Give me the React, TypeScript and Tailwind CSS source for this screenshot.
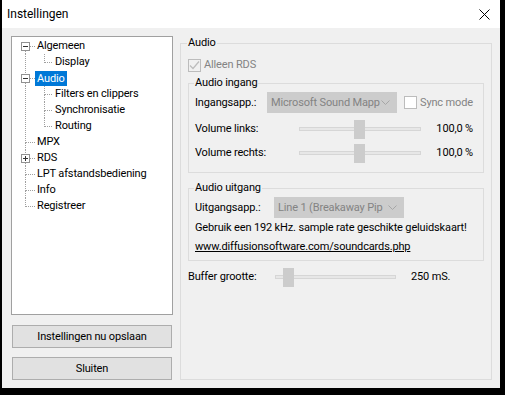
import React from "react";

type Row = {
  label: string;
  level: 0 | 1;
  box?: "minus" | "plus";
  rootTop: boolean;
  rootBottom: boolean;
  childBottom?: boolean;
  selected?: boolean;
};

const rows: Row[] = [
  { label: "Algemeen", level: 0, box: "minus", rootTop: false, rootBottom: true },
  { label: "Display", level: 1, rootTop: true, rootBottom: true, childBottom: false },
  { label: "Audio", level: 0, box: "minus", rootTop: true, rootBottom: true, selected: true },
  { label: "Filters en clippers", level: 1, rootTop: true, rootBottom: true, childBottom: true },
  { label: "Synchronisatie", level: 1, rootTop: true, rootBottom: true, childBottom: true },
  { label: "Routing", level: 1, rootTop: true, rootBottom: true, childBottom: false },
  { label: "MPX", level: 0, rootTop: true, rootBottom: true },
  { label: "RDS", level: 0, box: "plus", rootTop: true, rootBottom: true },
  { label: "LPT afstandsbediening", level: 0, rootTop: true, rootBottom: true },
  { label: "Info", level: 0, rootTop: true, rootBottom: true },
  { label: "Registreer", level: 0, rootTop: true, rootBottom: false },
];

const DOT = "#a0a0a0";

function TreeGlyph({ r }: { r: Row }) {
  const w = r.level === 0 ? 23 : 41;
  const segs: React.ReactElement[] = [];
  if (r.level === 0) {
    if (r.box) {
      if (r.rootTop) segs.push(<line key="rt" x1={13.5} y1={0} x2={13.5} y2={4} />);
      if (r.rootBottom) segs.push(<line key="rb" x1={13.5} y1={13} x2={13.5} y2={16} />);
      segs.push(<line key="h" x1={18} y1={8.5} x2={23} y2={8.5} />);
    } else {
      if (r.rootTop) segs.push(<line key="rt" x1={13.5} y1={0} x2={13.5} y2={9} />);
      if (r.rootBottom) segs.push(<line key="rb" x1={13.5} y1={9} x2={13.5} y2={16} />);
      segs.push(<line key="h" x1={14} y1={8.5} x2={23} y2={8.5} />);
    }
  } else {
    segs.push(<line key="r" x1={13.5} y1={0} x2={13.5} y2={16} />);
    segs.push(<line key="ct" x1={32.5} y1={0} x2={32.5} y2={9} />);
    if (r.childBottom) segs.push(<line key="cb" x1={32.5} y1={9} x2={32.5} y2={16} />);
    segs.push(<line key="h" x1={33} y1={8.5} x2={41} y2={8.5} />);
  }
  return (
    <svg width={w} height={16} className="shrink-0" viewBox={`0 0 ${w} 16`}>
      <g stroke={DOT} strokeWidth={1} strokeDasharray="1 1">
        {segs}
      </g>
      {r.box && (
        <g>
          <rect x={9.5} y={4.5} width={8} height={8} fill="#ffffff" stroke="#919191" />
          <line x1={11} y1={8.5} x2={16} y2={8.5} stroke="#333" />
          {r.box === "plus" && <line x1={13.5} y1={6} x2={13.5} y2={11} stroke="#333" />}
        </g>
      )}
    </svg>
  );
}

function Checkbox({ checked }: { checked?: boolean }) {
  return (
    <div className="w-[13px] h-[13px] border border-[#bcbcbc] bg-[#f0f0f0] shrink-0 flex items-center justify-center">
      {checked && (
        <svg width="11" height="11" viewBox="0 0 11 11">
          <path d="M1 5.5 L4 8.5 L10 1.5" fill="none" stroke="#bcbcbc" strokeWidth="1.2" />
        </svg>
      )}
    </div>
  );
}

function Combo({ text, width }: { text: string; width: string }) {
  return (
    <div className={`${width} h-[21px] bg-[#cccccc] border border-[#cccccc] flex items-center pl-[3px] pr-[6px] shrink-0`}>
      <span className="flex-1 text-[#838383] whitespace-nowrap overflow-hidden">{text}</span>
      <svg width="9" height="6" viewBox="0 0 9 6" className="shrink-0">
        <path d="M0.5 0.5 L4.5 4.5 L8.5 0.5" fill="none" stroke="#a6a6a6" />
      </svg>
    </div>
  );
}

function Slider({ trackW, thumbLeft }: { trackW: string; thumbLeft: string }) {
  return (
    <div className={`${trackW} h-[20px] flex items-center shrink-0`}>
      <div className="w-full h-[4px] bg-[#e7e7e7] border border-[#d6d6d6] flex items-center">
        <div className={`${thumbLeft} w-[11px] h-[19px] bg-[#cccccc] shrink-0`} />
      </div>
    </div>
  );
}

export default function App() {
  return (
    <div className="w-[505px] h-[395px] bg-black pl-[2px] font-['Roboto',sans-serif] text-[11px] tracking-[-0.15px] leading-[16px] text-black">
      <div className="w-[498px] h-[388px] flex flex-col">
        <div className="h-[28px] bg-white flex items-center justify-between pl-[5px] pr-[10px] shrink-0">
          <span className="text-[12px] tracking-normal">Instellingen</span>
          <svg width="11" height="11" viewBox="0 0 11 11" className="mt-[1px]">
            <path d="M0.5 0.5 L10.5 10.5 M10.5 0.5 L0.5 10.5" stroke="#000" strokeWidth="1" />
          </svg>
        </div>
        <div className="flex-1 bg-[#f0f0f0] flex">
          {/* left column */}
          <div className="ml-[9px] mt-[8px] flex flex-col w-[162px]">
            <div className="h-[279px] bg-white border border-[#a0a0a0] pt-[1px]">
              {rows.map((r) => (
                <div key={r.label} className="h-[16px] flex items-start">
                  <TreeGlyph r={r} />
                  <span
                    className={
                      r.selected
                        ? "px-[2px] bg-[#0078d7] text-white whitespace-nowrap h-[15px] leading-[15px] mt-[1px]"
                        : "px-[2px] whitespace-nowrap"
                    }
                  >
                    {r.label}
                  </span>
                </div>
              ))}
            </div>
            <div className="ml-[1px] mt-[10px] w-[160px] h-[23px] bg-[#e1e1e1] border border-[#adadad] flex items-center justify-center">
              Instellingen nu opslaan
            </div>
            <div className="ml-[1px] mt-[9px] w-[160px] h-[23px] bg-[#e1e1e1] border border-[#adadad] flex items-center justify-center">
              Sluiten
            </div>
          </div>

          {/* right column */}
          <div className="ml-[7px] mt-[15px] w-[312px] h-[337px] border border-[#dcdcdc] px-[7px] flex flex-col">
            <div className="-mt-[9px] -ml-[1px] px-[1px] w-fit bg-[#f0f0f0]">Audio</div>

            <div className="mt-[6px] h-[16px] flex items-center">
              <Checkbox checked />
              <span className="ml-[3px] text-[#838383]">Alleen RDS</span>
            </div>

            {/* Audio ingang */}
            <div className="mt-[10px] border border-[#dcdcdc] px-[6px] pb-[9px] flex flex-col">
              <div className="-mt-[9px] -ml-[1px] px-[1px] w-fit bg-[#f0f0f0]">Audio ingang</div>
              <div className="mt-[1px] flex items-center">
                <span className="w-[72px] shrink-0 whitespace-nowrap">Ingangsapp.:</span>
                <Combo text="Microsoft Sound Mapp" width="w-[130px]" />
                <div className="ml-[7px] flex items-center">
                  <div className="w-[13px] h-[13px] border border-[#bcbcbc] bg-white" />
                  <span className="ml-[3px] text-[#838383] whitespace-nowrap">Sync mode</span>
                </div>
              </div>
              <div className="mt-[6px] h-[20px] flex items-center">
                <span className="w-[104px] shrink-0">Volume links:</span>
                <Slider trackW="w-[122px]" thumbLeft="ml-[54px]" />
                <span className="w-[52px] text-right whitespace-nowrap">100,0 %</span>
              </div>
              <div className="mt-[4px] h-[20px] flex items-center">
                <span className="w-[104px] shrink-0">Volume rechts:</span>
                <Slider trackW="w-[122px]" thumbLeft="ml-[54px]" />
                <span className="w-[52px] text-right whitespace-nowrap">100,0 %</span>
              </div>
            </div>

            {/* Audio uitgang */}
            <div className="mt-[15px] border border-[#dcdcdc] px-[6px] pb-[5px] flex flex-col">
              <div className="-mt-[9px] -ml-[1px] px-[1px] w-fit bg-[#f0f0f0]">Audio uitgang</div>
              <div className="mt-[1px] flex items-center">
                <span className="w-[79px] shrink-0 whitespace-nowrap">Uitgangsapp.:</span>
                <Combo text="Line 1 (Breakaway Pip" width="w-[130px]" />
              </div>
              <div className="mt-[2px] whitespace-nowrap">Gebruik een 192 kHz. sample rate geschikte geluidskaart!</div>
              <div className="mt-[3px] whitespace-nowrap underline">www.diffusionsoftware.com/soundcards.php</div>
            </div>

            <div className="mt-[6px] h-[20px] flex items-center">
              <span className="w-[87px] shrink-0">Buffer grootte:</span>
              <Slider trackW="w-[121px]" thumbLeft="ml-[7px]" />
              <span className="ml-[15px] whitespace-nowrap">250 mS.</span>
            </div>
          </div>
        </div>
      </div>
    </div>
  );
}
